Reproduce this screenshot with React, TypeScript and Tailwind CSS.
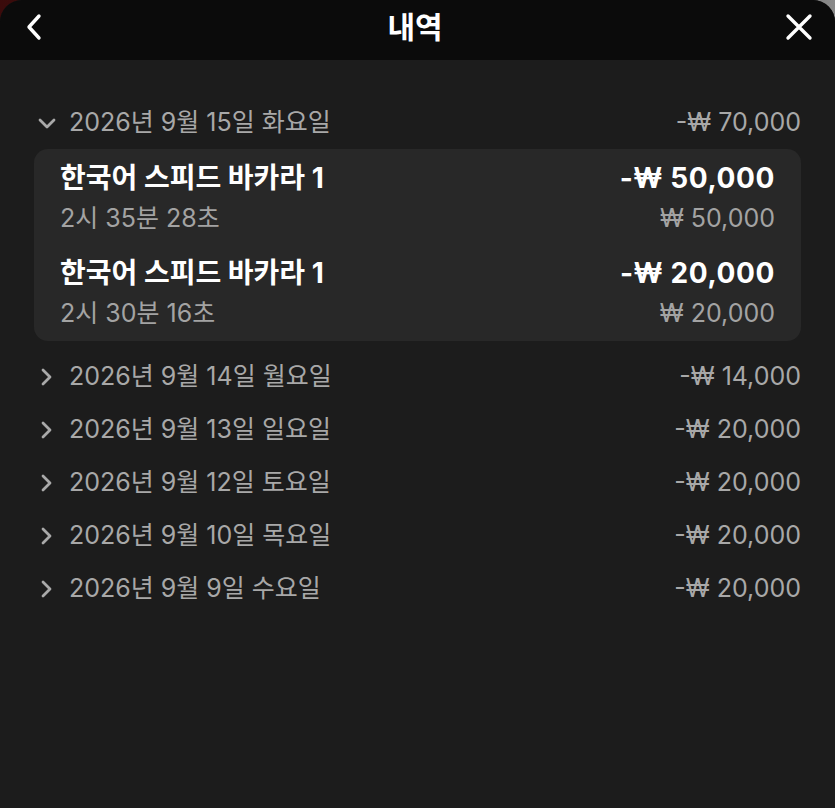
import React from "react";

const FONT = { fontFamily: 'Inter, "Noto Sans CJK KR", sans-serif' };

const days = [
  { date: "2026년 9월 14일 월요일", total: "-₩ 14,000" },
  { date: "2026년 9월 13일 일요일", total: "-₩ 20,000" },
  { date: "2026년 9월 12일 토요일", total: "-₩ 20,000" },
  { date: "2026년 9월 10일 목요일", total: "-₩ 20,000" },
  { date: "2026년 9월 9일 수요일", total: "-₩ 20,000" },
];

const bets = [
  { game: "한국어 스피드 바카라 1", time: "2시 35분 28초", amount: "-₩ 50,000", stake: "₩ 50,000" },
  { game: "한국어 스피드 바카라 1", time: "2시 30분 16초", amount: "-₩ 20,000", stake: "₩ 20,000" },
];

function Chevron({ open }: { open?: boolean }) {
  return (
    <svg width="20" height="20" viewBox="0 0 20 20" fill="none" stroke="#a9a9a9" strokeWidth="2.8" strokeLinecap="round" strokeLinejoin="round">
      {open ? <path d="M3 7l7 7 7-7" /> : <path d="M7 3l7 7-7 7" />}
    </svg>
  );
}

function DayRow({ date, total, open }: { date: string; total: string; open?: boolean }) {
  return (
    <div className="h-[53px] flex items-center justify-between text-[25px] text-[#a8a8a8]">
      <div className="flex items-center">
        <span className={open ? "w-[35px] pl-[3px] flex" : "w-[35px] pl-[2px] flex"}>
          <Chevron open={open} />
        </span>
        <span>{date}</span>
      </div>
      <span>{total}</span>
    </div>
  );
}

export default function App() {
  return (
    <div className="w-[835px] h-[808px] bg-gradient-to-r from-[#3b0b0b] via-[#101010] to-[#8a8a8a]" style={FONT}>
      <div className="h-full rounded-t-[22px] overflow-hidden flex flex-col bg-[#1c1c1c]">
        <header className="h-[60px] shrink-0 bg-[#0b0b0b] flex items-center justify-between pl-[25px] pr-[22px] pb-[6px]">
          <svg width="20" height="28" viewBox="0 0 20 28" fill="none" stroke="#fff" strokeWidth="3.4" strokeLinecap="round" strokeLinejoin="round">
            <path d="M14 3L4 14l10 11" />
          </svg>
          <h1 className="text-[30px] font-bold text-white leading-none">내역</h1>
          <svg width="28" height="28" viewBox="0 0 28 28" fill="none" stroke="#fff" strokeWidth="3.4" strokeLinecap="round">
            <path d="M3 3l22 22M25 3L3 25" />
          </svg>
        </header>

        <main className="px-[34px] pt-[36px]">
          <DayRow date="2026년 9월 15일 화요일" total="-₩ 70,000" open />

          <div className="rounded-[14px] bg-[#282828] px-[26px] pt-[13px] pb-[12px]">
            {bets.map((b, i) => (
              <div key={i} className={i > 0 ? "mt-[23px]" : ""}>
                <div className="flex justify-between leading-[32px] text-white font-bold">
                  <span className="text-[28px]">{b.game}</span>
                  <span className="text-[28px] tracking-[0.6px]">{b.amount}</span>
                </div>
                <div className="flex justify-between leading-[32px] mt-[8px] text-[25px] text-[#a3a3a3]">
                  <span>{b.time}</span>
                  <span>{b.stake}</span>
                </div>
              </div>
            ))}
          </div>

          <div className="mt-[9px]">
            {days.map((d) => (
              <DayRow key={d.date} date={d.date} total={d.total} />
            ))}
          </div>
        </main>
      </div>
    </div>
  );
}
